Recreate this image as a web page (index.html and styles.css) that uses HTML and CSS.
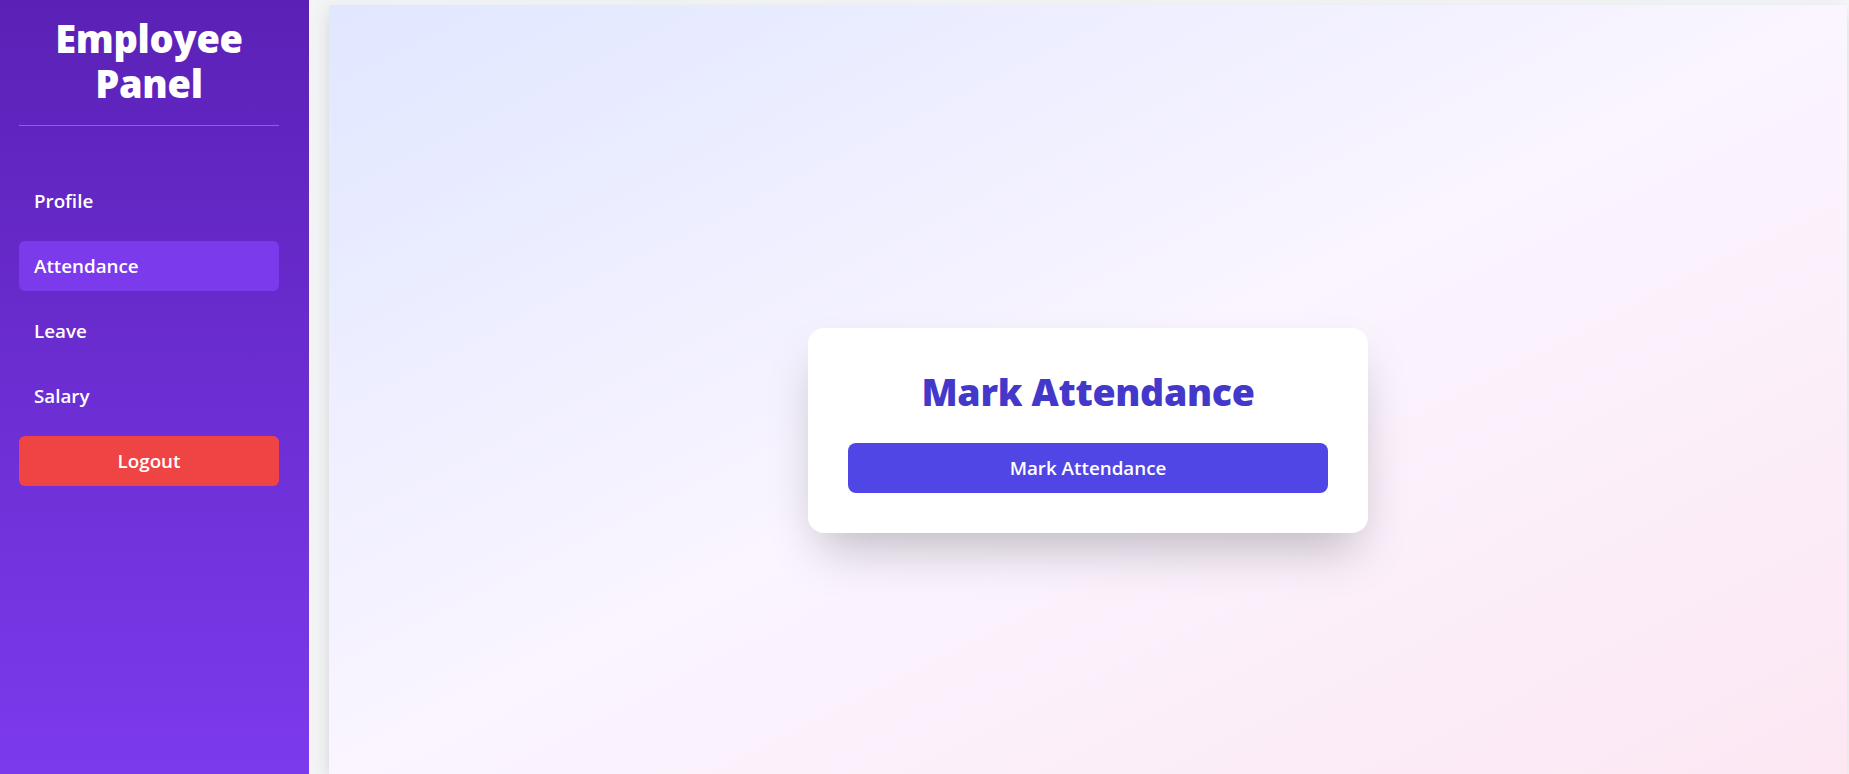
FILE: index.html
```html
<!DOCTYPE html>
<html lang="en">
<head>
<meta charset="utf-8">
<title>Employee Panel</title>
<link rel="stylesheet" href="styles.css">
</head>
<body>
<div class="layout">
  <aside class="sidebar">
    <h1 class="brand">Employee<br>Panel</h1>
    <nav class="nav">
      <a class="nav-item">Profile</a>
      <a class="nav-item active">Attendance</a>
      <a class="nav-item">Leave</a>
      <a class="nav-item">Salary</a>
      <button class="logout">Logout</button>
    </nav>
  </aside>
  <main class="main">
    <section class="panel">
      <div class="card">
        <h2 class="card-title">Mark Attendance</h2>
        <button class="primary">Mark Attendance</button>
      </div>
    </section>
  </main>
</div>
</body>
</html>
```
FILE: styles.css
```css
* { box-sizing: border-box; }
html, body { margin: 0; height: 100%; overflow: hidden; }
body {
  font-family: "Open Sans", "Noto Sans", sans-serif;
  background: #f3f4f6;
}
.layout {
  display: flex;
  height: 774px;
}
.sidebar {
  width: 309px;
  flex-shrink: 0;
  background: linear-gradient(to bottom, #5b21b6, #7c3aed);
  padding: 16px 30px 0 19px;
  color: #fff;
}
.brand {
  margin: 0;
  text-align: center;
  font-size: 38px;
  line-height: 45px;
  font-weight: 800;
  letter-spacing: -0.3px;
  padding-bottom: 19px;
  border-bottom: 1px solid #8b5cf6;
}
.nav {
  display: flex;
  flex-direction: column;
  gap: 15px;
  margin-top: 50px;
}
.nav-item {
  display: flex;
  align-items: center;
  height: 50px;
  padding: 0 15px;
  border-radius: 6px;
  font-size: 18.8px;
  font-weight: 600;
  color: #fff;
}
.nav-item.active { background: #7c3aed; }
.logout {
  height: 50px;
  border: 0;
  border-radius: 6px;
  background: #ef4444;
  color: #fff;
  font-family: inherit;
  font-size: 18.8px;
  font-weight: 600;
}
.main {
  flex: 1;
  padding: 5px 2px 0 20px;
  min-width: 0;
}
.panel {
  height: 100%;
  background: linear-gradient(to bottom right, #e0e7ff, #faf5ff, #fce7f3);
  box-shadow: 0 10px 15px -3px rgba(0,0,0,0.1), 0 4px 6px -4px rgba(0,0,0,0.1), -6px 0 16px rgba(0,0,0,0.04);
  display: flex;
  align-items: flex-start;
  justify-content: center;
  padding-top: 323px;
}
.card {
  width: 560px;
  height: 205px;
  background: #fff;
  border-radius: 16px;
  box-shadow: 0 25px 50px -12px rgba(0,0,0,0.25);
  padding: 44px 40px 0;
  display: flex;
  flex-direction: column;
  align-items: stretch;
}
.card-title {
  margin: 0;
  text-align: center;
  color: #4338ca;
  font-size: 37.5px;
  line-height: 40px;
  font-weight: 800;
  letter-spacing: -0.3px;
}
.primary {
  margin-top: 31px;
  height: 50px;
  border: 0;
  border-radius: 8px;
  background: #4f46e5;
  color: #fff;
  font-family: inherit;
  font-size: 18.8px;
  font-weight: 600;
}
```
